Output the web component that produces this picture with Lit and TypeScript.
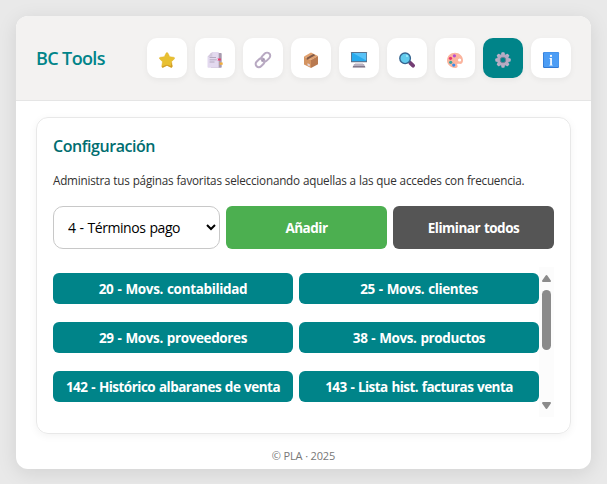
import { LitElement, html, css, svg } from "lit";
import { classMap } from "lit/directives/class-map.js";
import { styleMap } from "lit/directives/style-map.js";

const icons: Record<string, unknown> = {
  Favoritos: svg`<path d="M8 .6Q8.7.6 9.1 1.5L10.7 4.7 14.7 5.3Q16.3 5.7 15.3 6.9L12.5 9.7 13.3 14Q13.4 15.9 11.7 15.2L8 13.4 4.4 15.2Q2.7 15.9 2.8 14L3.5 9.7.7 6.9Q-.3 5.7 1.3 5.3L5.3 4.7 6.9 1.5Q7.3.6 8 .6Z" fill="#e8c031" stroke="#dfb32f" stroke-width=".5"/><path d="M12.5 9.7 13.3 14Q13.4 15.9 11.7 15.2L8 13.4 4.4 15.2Q3 15.8 2.8 14.5L8 12.8 12 14Z" fill="#d09a29"/>`,
  Marcadores: svg`<path d="M3.7 1H14Q14.7 1 14.7 2V15Q14.7 15.8 14 15.8H4Z" fill="#a79aae"/><path d="M5.3 0H11.7V15.8H1.3Q.5 15.8 .5 15V4.8Z" fill="#e3d9ef"/><path d="M.5 4.8 5.3 0V4.8Z" fill="#d3c8dd"/><path d="M2.6 5.5H9M2.6 7.8H9.7M2.6 10H7.5" stroke="#aaa0b5" stroke-width=".8"/><path d="M10.4 6.4H13.8V8.5H10.4L11.2 7.5Z" fill="#ed3768"/><path d="M12.3 10.6H15.7V12.7H12.3L13 11.7Z" fill="#f4ae38"/>`,
  Enlaces: svg`<g transform="rotate(-45 8 8)" fill="none" stroke="#b8a9c2" stroke-width="2"><rect x="-1" y="4.7" width="10" height="6.4" rx="3.2"/><rect x="7" y="4.7" width="10" height="6.4" rx="3.2"/><path d="M6 8H10" stroke="#a498ae" stroke-width="1.2"/></g>`,
  Productos: svg`<path d="M1 4.5 8 .5 15 4 8 8Z" fill="#e1a16f"/><path d="M1 4.5 8 8V16L1 12.5Z" fill="#d49461"/><path d="M15 4V12.3L8 16V8Z" fill="#b97a50"/><path d="M3.2 3.2 5.2 2.1 11.7 5.8V8.1L10 7Z" fill="#7e5949" transform="matrix(-1 0 0 1 15.5 0)"/><path d="M4.5 11.2 6.8 12.3V14.4L4.5 13.3Z" fill="#e5d8df"/>`,
  Pantalla: svg`<rect x="0" y="0" width="16" height="10.3" rx=".4" fill="#606d82"/><rect x=".8" y=".9" width="14.4" height="8.3" fill="#28abed"/><path d="M2 .9H15.2V8.5Z" fill="#58c2f7"/><path d="M4 10.3H12V12H4Z" fill="#dcd8df"/><path d="M3 12H13L14.2 15.3H1.8Z" fill="#b8b0bf"/><path d="M2 14.1H14L14.3 15.6H1.7Z" fill="#83798b"/>`,
  Buscar: svg`<path d="M11.2 10.8 14.1 13.7" stroke="#743d74" stroke-width="3.8" stroke-linecap="round"/><path d="M9.8 9.4 11 10.5" stroke="#5e5776" stroke-width="2"/><circle cx="6.1" cy="6.3" r="5.3" fill="#62cbed" stroke="#36648f" stroke-width="1.4"/><circle cx="8" cy="4" r="1.1" fill="#a1edfc"/>`,
  Temas: svg`<path d="M8 .8C12.4.8 16 4 16 8.2C16 11 14.6 12.3 12 11.8C10.1 11.4 9.8 12 10.4 13.3C11 15 10.3 16 8.2 16C3.5 15.8 0 12.5 0 8.6C0 4.1 3.5.8 8 .8Z" fill="#fbb49e"/><circle cx="12.6" cy="8" r="1.6" fill="#fff"/><circle cx="7.4" cy="3.8" r="1.6" fill="#b64bd1"/><circle cx="3.5" cy="6.3" r="1.6" fill="#e9366b"/><circle cx="3.7" cy="10.3" r="1.6" fill="#38a49f"/><circle cx="6.7" cy="13.1" r="1.6" fill="#368def"/>`,
  Configurar: svg`${[0, 45, 90, 135].map(a => svg`<rect x="6.3" y=".3" width="3.4" height="15.4" rx="1" transform=${`rotate(${a} 8 8)`} fill="#bbb0c8"/>`)}<circle cx="8" cy="8" r="4.4" fill="#02848a" stroke="#b5aac2" stroke-width="3.4"/><circle cx="8" cy="8" r="2.8" fill="#02848a" stroke="#8d8199" stroke-width=".8"/>`,
  Informacion: svg`<rect width="16" height="16" rx="1.3" fill="#3279d3"/><rect x=".8" y=".2" width="15" height="14.9" rx="1" fill="#4c9df5"/><circle cx="8" cy="3.9" r="1.1" fill="#fff"/><path d="M6.6 6.1H8.9V12.8H9.6V13.6H6.4V12.8H7.2V7H6.6Z" fill="#fff"/>`,
};

const favoritos: [string, number][] = [
  ["20 - Movs. contabilidad", -0.34],
  ["25 - Movs. clientes", -0.37],
  ["29 - Movs. proveedores", -0.38],
  ["38 - Movs. productos", -0.4],
  ["142 - Histórico albaranes de venta", -0.52],
  ["143 - Lista hist. facturas venta", -0.56],
];

class AppRoot extends LitElement {
  static properties = { active: { state: true } };
  declare active: string;

  static styles = css`
    :host { display: block; box-sizing: border-box; height: 484px; padding: 16px 16px 15px; background: #e9e9e9; font-family: "Open Sans", sans-serif; }
    * { box-sizing: border-box; }
    .panel { display: flex; flex-direction: column; height: 453px; border-radius: 12px; background: #fff; overflow: hidden; box-shadow: 0 4px 20px rgba(0,0,0,.1); }
    .head { display: flex; align-items: center; justify-content: space-between; height: 85px; flex: none; padding: 0 20px; background: #f3f2f1; border-bottom: 1px solid #e5e5e5; }
    .brand { margin: 0; font-size: 18px; font-weight: 600; letter-spacing: -.62px; color: #008489; }
    .tabs { display: flex; gap: 8px; }
    .tab { display: flex; align-items: center; justify-content: center; width: 40px; height: 40px; padding: 3px 0 0; border: 0; border-radius: 10px; background: #fff; box-shadow: 0 2px 6px rgba(0,0,0,.05); }
    .tab.on { background: #008489; }
    .icon { width: 16px; height: 16px; overflow: visible; display: block; }
    .card { height: 317px; flex: none; margin: 16px 20px 0; padding: 16px; border: 1px solid #e8e8e8; border-radius: 12px; box-shadow: 0 2px 8px rgba(0,0,0,.05); }
    .title { margin: 0; font-size: 16px; line-height: 24px; font-weight: 600; letter-spacing: -.45px; color: #006d70; }
    .text { margin: 13px 0 0; font-size: 11.7px; line-height: 18px; letter-spacing: -.21px; word-spacing: .2px; color: #323130; white-space: nowrap; }
    .form { display: grid; grid-template-columns: 167px 161px 161px; gap: 6px; height: 43px; margin-top: 17px; }
    .pick { height: 43px; padding: 0 0 0 10px; border: 1px solid #c8c8c8; border-radius: 10px; background: #fff; color: #000; font: 14px "Open Sans", sans-serif; letter-spacing: -.45px; word-spacing: .8px; }
    .btn { display: flex; align-items: center; justify-content: center; padding: 0; border: 0; border-radius: 6px; color: #fff; background: #008489; font: 700 13.5px "Open Sans", sans-serif; letter-spacing: -.5px; word-spacing: .8px; white-space: nowrap; }
    .add { background: #4caf50; }
    .clear { background: #555; }
    .list { display: flex; height: 150px; margin-top: 18px; }
    .grid { display: grid; grid-template-columns: 240px 240px; grid-auto-rows: 31px; gap: 18px 6px; padding-top: 6px; }
    .bar { width: 15px; height: 150px; background: #fcfcfc; }
    .foot { margin: 13px 0 0; text-align: center; font-size: 11px; line-height: 18px; letter-spacing: -.15px; color: #777; }
  `;

  constructor() {
    super();
    this.active = "Configurar";
  }

  render() {
    return html`
      <main class="panel">
        <header class="head">
          <h1 class="brand">BC Tools</h1>
          <nav class="tabs">
            ${Object.entries(icons).map(([name, art]) => html`
              <button class=${classMap({ tab: true, on: name === this.active })} @click=${() => (this.active = name)}>
                <svg class="icon" viewBox="0 0 16 16">${art}</svg>
              </button>`)}
          </nav>
        </header>
        <section class="card">
          <h2 class="title">Configuración</h2>
          <p class="text">Administra tus páginas favoritas seleccionando aquellas a las que accedes con frecuencia.</p>
          <div class="form">
            <select class="pick"><option>4 - Términos pago</option></select>
            <button class="btn add">Añadir</button>
            <button class="btn clear">Eliminar todos</button>
          </div>
          <div class="list">
            <div class="grid">
              ${favoritos.map(([label, tracking]) => html`<button class="btn" style=${styleMap({ letterSpacing: `${tracking}px` })}>${label}</button>`)}
            </div>
            <svg class="bar" viewBox="0 0 15 150">
              <path d="M4 14 7.5 9 11 14Z M4 136H11L7.5 141Z" fill="#8b8b8b" stroke="#8b8b8b" stroke-width="2" stroke-linejoin="round"/>
              <rect x="3" y="23" width="9" height="60" rx="4.5" fill="#8b8b8b"/>
            </svg>
          </div>
        </section>
        <footer class="foot">© PLA · 2025</footer>
      </main>`;
  }
}
customElements.define("app-root", AppRoot);
